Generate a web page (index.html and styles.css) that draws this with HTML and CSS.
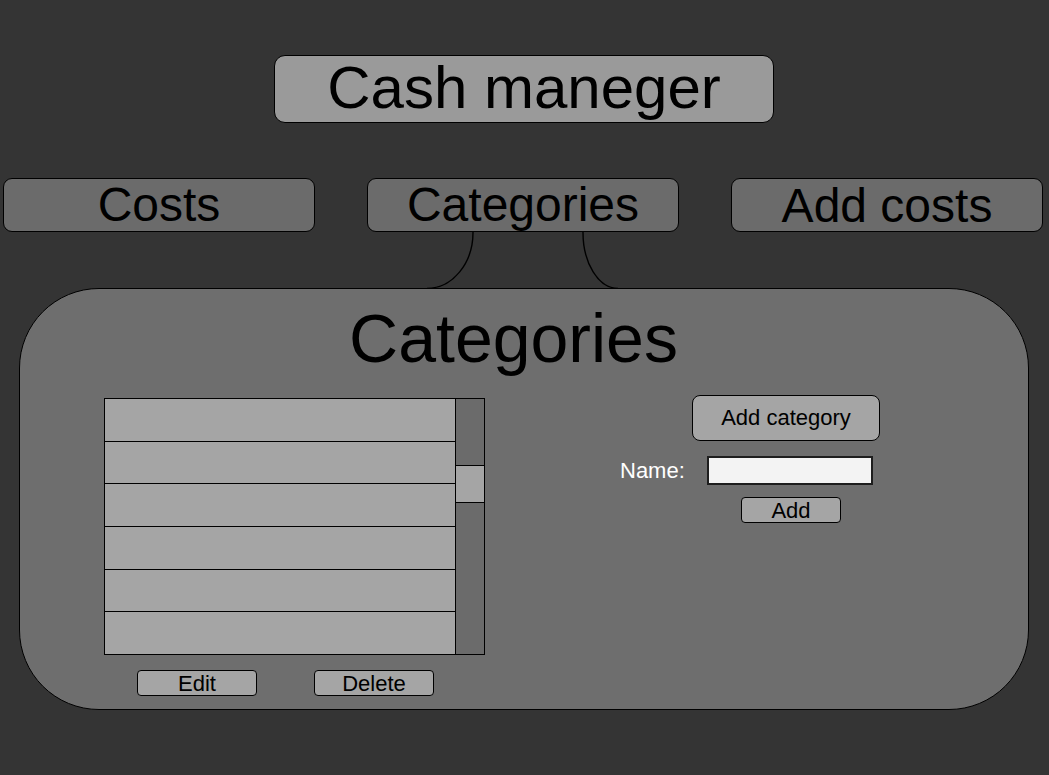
FILE: index.html
```html
<!DOCTYPE html>
<html>
<head>
<meta charset="utf-8">
<link rel="stylesheet" href="styles.css">
</head>
<body>
<div class="app">
  <header class="top">
    <div class="title">Cash maneger</div>
  </header>
  <nav class="tabs">
    <div class="tab">Costs</div>
    <div class="tab">Categories</div>
    <div class="tab tab-add">Add costs</div>
  </nav>
  <div class="link">
    <svg class="link-svg" width="1049" height="57" viewBox="0 0 1049 57">
      <path d="M473 0 A46 56 0 0 1 427 56.5" fill="none" stroke="#000" stroke-width="1.4"/>
      <path d="M583 0 A35 56 0 0 0 618 56.5" fill="none" stroke="#000" stroke-width="1.4"/>
    </svg>
  </div>
  <section class="panel">
    <h1 class="panel-title">Categories</h1>
    <div class="panel-body">
      <div class="list-col">
        <div class="list">
          <div class="rows">
            <div class="row"></div>
            <div class="row"></div>
            <div class="row"></div>
            <div class="row"></div>
            <div class="row"></div>
            <div class="row"></div>
          </div>
          <div class="scrollbar"><div class="thumb"></div></div>
        </div>
        <div class="list-actions">
          <button class="btn btn-small">Edit</button>
          <button class="btn btn-small">Delete</button>
        </div>
      </div>
      <div class="form-col">
        <button class="btn btn-add-cat">Add category</button>
        <div class="field">
          <label class="field-label">Name:</label>
          <input class="field-input" type="text">
        </div>
        <button class="btn btn-add">Add</button>
      </div>
    </div>
  </section>
</div>
</body>
</html>
```
FILE: styles.css
```css
* { box-sizing: border-box; }
html, body { margin: 0; padding: 0; }
body {
  background: #343434;
  font-family: "Liberation Sans", Arial, sans-serif;
  color: #000;
  width: 1049px;
  height: 775px;
  overflow: hidden;
}
.app { display: flex; flex-direction: column; }

.top { display: flex; padding-top: 55px; padding-left: 274px; }
.title {
  width: 500px;
  height: 68px;
  background: #9a9a9a;
  border: 1.5px solid #000;
  border-radius: 11px;
  font-size: 60px;
  line-height: 63px;
  text-align: center;
}

.tabs {
  display: flex;
  justify-content: space-between;
  margin-top: 55px;
  padding: 0 6px 0 3px;
}
.tab {
  width: 312px;
  height: 54px;
  background: #6b6b6b;
  border: 1.5px solid #000;
  border-radius: 9px;
  font-size: 48px;
  line-height: 51px;
  text-align: center;
}
.tab-add { line-height: 54px; }

.link { height: 56px; }
.link-svg { display: block; }

.panel {
  margin-left: 19px;
  width: 1010px;
  height: 422px;
  background: #6e6e6e;
  border: 1.5px solid #000;
  border-radius: 80px;
  padding-top: 15px;
}
.panel-title {
  margin: 0;
  font-weight: normal;
  font-size: 68px;
  line-height: 68px;
  text-align: center;
  padding-right: 21px;
}
.panel-body {
  display: flex;
  margin-top: 26px;
  padding-left: 84px;
}

.list-col { display: flex; flex-direction: column; width: 381px; }
.list {
  display: flex;
  height: 257px;
  border: 1.5px solid #000;
}
.rows { flex: 1; display: flex; flex-direction: column; }
.row {
  flex: 1;
  background: #a5a5a5;
  border-bottom: 1.5px solid #000;
}
.row:last-child { border-bottom: none; }
.scrollbar {
  width: 29px;
  background: #6b6b6b;
  border-left: 1.5px solid #000;
  display: flex;
  flex-direction: column;
}
.thumb {
  margin-top: 66px;
  margin-left: -1px;
  width: 30px;
  height: 38px;
  background: #a5a5a5;
  border: 1.5px solid #000;
}

.list-actions {
  display: flex;
  gap: 57px;
  margin-top: 15px;
  padding-left: 33px;
}

.btn {
  font-family: "Liberation Sans", Arial, sans-serif;
  color: #000;
  background: #a5a5a5;
  border: 1.5px solid #000;
  padding: 0;
  font-size: 22px;
  line-height: 22px;
}
.btn-small {
  width: 120px;
  height: 26px;
  border-radius: 4px;
  line-height: 26px;
}

.form-col {
  display: flex;
  flex-direction: column;
  margin-left: 135px;
  margin-top: -3px;
}
.btn-add-cat {
  margin-left: 72px;
  width: 188px;
  height: 46px;
  border-radius: 8px;
}
.field {
  display: flex;
  align-items: center;
  margin-top: 15px;
}
.field-label {
  color: #fff;
  font-size: 22px;
  width: 65px;
}
.field-input {
  margin-left: 22px;
  width: 166px;
  height: 29px;
  background: #f3f3f3;
  border: 2px solid #1e1e1e;
  padding: 0;
  outline: none;
}
.btn-add {
  margin-top: 12px;
  margin-left: 121px;
  width: 100px;
  height: 26px;
  border-radius: 4px;
  line-height: 26px;
}
```
